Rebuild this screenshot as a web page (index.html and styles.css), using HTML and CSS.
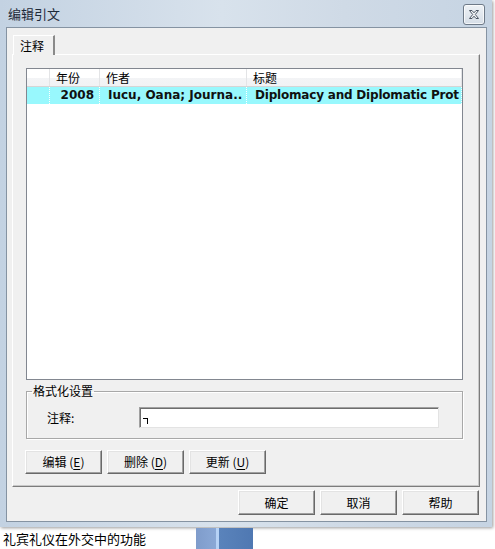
FILE: index.html
```html
<!DOCTYPE html>
<html lang="zh-CN">
<head>
  <meta charset="UTF-8" />
  <title>编辑引文</title>
  <link rel="stylesheet" href="styles.css">
</head>
<body>

  <div class="top">
    <div class="window">
      <div class="titlebar">
        <span class="title">编辑引文</span>
        <div class="close">
          <svg width="12" height="11" viewBox="0 0 12 11">
            <path d="M1.5 1.5 L4 1.5 L6 3.8 L8 1.5 L10.5 1.5 L7.3 5.5 L10.5 9.5 L8 9.5 L6 7.2 L4 9.5 L1.5 9.5 L4.7 5.5 Z" fill="#f4f6f8" stroke="#4a5563" stroke-width="1" stroke-linejoin="round"/>
          </svg>
        </div>
      </div>

      <div class="client">
        <div class="tabs">
          <div class="tab">注释</div>
        </div>

        <div class="panel">
          <div class="list">
            <div class="row head">
              <div class="cell"></div>
              <div class="cell">年份</div>
              <div class="cell">作者</div>
              <div class="cell">标题</div>
            </div>
            <div class="row item">
              <div class="cell"></div>
              <div class="cell year">2008</div>
              <div class="cell">Iucu, Oana; Journa..</div>
              <div class="cell tight">Diplomacy and Diplomatic Prot</div>
            </div>
          </div>

          <fieldset class="group">
            <legend>格式化设置</legend>
            <div class="field">
              <label>注释:</label>
              <div class="input"><span class="caret"></span></div>
            </div>
          </fieldset>

          <div class="actions">
            <button class="btn">编辑 (<u>E</u>)</button>
            <button class="btn">删除 (<u>D</u>)</button>
            <button class="btn">更新 (<u>U</u>)</button>
          </div>
        </div>

        <div class="footer">
          <button class="btn tall">确定</button>
          <button class="btn tall">取消</button>
          <button class="btn tall">帮助</button>
        </div>
      </div>
    </div>
    <div class="aside"></div>
  </div>

  <div class="below">
    <span class="doc-text">礼宾礼仪在外交中的功能</span>
    <div class="taskbar"></div>
  </div>

</body>
</html>
```

FILE: styles.css
```css
body {
  margin: 0;
  width: 495px;
  height: 549px;
  overflow: hidden;
  background: #fff;
  font-family: "Noto Sans CJK SC", sans-serif;
  font-size: 12px;
  color: #000;
}

.top {
  display: flex;
  height: 527px;
}

.window {
  width: 492px;
  height: 527px;
  box-sizing: border-box;
  padding: 0 5px 5px 6px;
  background: linear-gradient(90deg, #c3d2e2, #d8e2ec 45%, #cfdae6 70%, #c6d4e3);
  box-shadow: 1px 1px 3px rgba(0, 0, 0, 0.4);
  display: flex;
  flex-direction: column;
}

.titlebar {
  height: 27px;
  display: flex;
  justify-content: space-between;
  align-items: flex-start;
  margin-left: -6px;
  margin-right: -5px;
}

.title {
  margin: 5px 0 0 8px;
  font-size: 13px;
  line-height: 17px;
  color: #1e2a38;
}

.close {
  width: 20px;
  height: 19px;
  margin: 4px 7px 0 0;
  border: 1px solid #6e7a88;
  border-radius: 3px;
  background: linear-gradient(#eef2f6, #d6dee7);
  box-shadow: inset 0 0 0 1px rgba(255, 255, 255, 0.7);
  display: flex;
  align-items: center;
  justify-content: center;
}

.client {
  flex: 1;
  background: #f0f0f0;
  border: 1px solid #8593a2;
  display: flex;
  flex-direction: column;
}

.tabs {
  display: flex;
  padding: 7px 0 0 6px;
}

.tab {
  width: 42px;
  height: 20px;
  box-sizing: border-box;
  border-top: 1px solid #fff;
  border-left: 1px solid #fff;
  border-right: 2px solid #8a8a8a;
  background: #f0f0f0;
  padding-left: 6px;
  line-height: 20px;
  position: relative;
  margin-bottom: -1px;
  z-index: 1;
}

.panel {
  margin-left: 5px;
  width: 468px;
  box-sizing: border-box;
  border-top: 1px solid #fff;
  border-left: 1px solid #fff;
  border-right: 1px solid #7c7c7c;
  border-bottom: 1px solid #7c7c7c;
  box-shadow: inset -1px -1px 0 #c8c8c8;
  padding: 13px 16px 12px 13px;
}

.list {
  height: 312px;
  box-sizing: border-box;
  border: 1px solid #828790;
  background: #fff;
  overflow: hidden;
}

.row {
  display: grid;
  grid-template-columns: 23px 50px 147px 1fr;
  white-space: nowrap;
}

.head {
  height: 18px;
  box-sizing: border-box;
  background: linear-gradient(#fff 0, #fff 50%, #f3f4f6 50%, #f1f2f4 100%);
  border-bottom: 1px solid #d5d5d5;
}

.head .cell {
  border-right: 1px solid #e3e4e6;
  padding-left: 6px;
  line-height: 17px;
}

.item {
  height: 17px;
  background: #98f8fd;
}

.item .cell {
  font-family: "DejaVu Sans", sans-serif;
  font-weight: bold;
  font-size: 12px;
  line-height: 17px;
  color: #101010;
  border-right: 1px dotted #fff;
  padding-left: 8px;
  overflow: hidden;
}

.item .tight {
  letter-spacing: -0.2px;
}

.item .year {
  text-align: right;
  padding: 0 5px 0 0;
}

.group {
  margin: 3px 0 0 0;
  padding: 8px 0 10px 0;
  border: 1px solid #a8a8a8;
  box-shadow: inset 1px 1px 0 #fff, 1px 1px 0 #fff;
}

.group legend {
  margin-left: 5px;
  padding: 0 1px;
  line-height: 16px;
}

.field {
  display: flex;
  align-items: center;
  padding-left: 20px;
}

.field label {
  width: 92px;
  line-height: 21px;
}

.input {
  width: 300px;
  height: 21px;
  box-sizing: border-box;
  background: #fff;
  border-top: 1px solid #a0a0a0;
  border-left: 1px solid #a0a0a0;
  border-right: 1px solid #e3e3e3;
  border-bottom: 1px solid #e3e3e3;
  box-shadow: inset 1px 1px 0 #6d6d6d;
  padding: 10px 0 0 3px;
}

.caret {
  display: block;
  width: 4px;
  height: 5px;
  border-top: 1px solid #000;
  border-right: 1px solid #000;
}

.actions {
  display: flex;
  gap: 5px;
  margin: 11px 0 0 -1px;
}

.btn {
  width: 77px;
  height: 24px;
  box-sizing: border-box;
  background: #f0f0f0;
  border-top: 1px solid #fff;
  border-left: 1px solid #fff;
  border-right: 1px solid #696969;
  border-bottom: 1px solid #696969;
  box-shadow: inset -1px -1px 0 #a0a0a0, inset 1px 1px 0 #e3e3e3;
  font-family: "Noto Sans CJK SC", sans-serif;
  font-size: 12px;
  color: #000;
  padding: 0;
  line-height: 20px;
}

.btn u {
  text-underline-offset: 2px;
}

.btn.tall {
  height: 25px;
}

.footer {
  display: flex;
  justify-content: flex-end;
  gap: 5px;
  margin: 3px 7px 0 0;
}

.aside {
  flex: 1;
}

.below {
  height: 22px;
  display: flex;
  align-items: flex-end;
}

.doc-text {
  margin-left: 3px;
  font-size: 13px;
  line-height: 18px;
  margin-bottom: 1px;
}

.taskbar {
  width: 57px;
  height: 21px;
  margin-left: 50px;
  background: linear-gradient(90deg, #7f9ccb 0, #8aa8d6 20px, #b6d2f6 20px, #b6d2f6 23px, #5a83bb 23px, #4f78b2 100%);
}
```
